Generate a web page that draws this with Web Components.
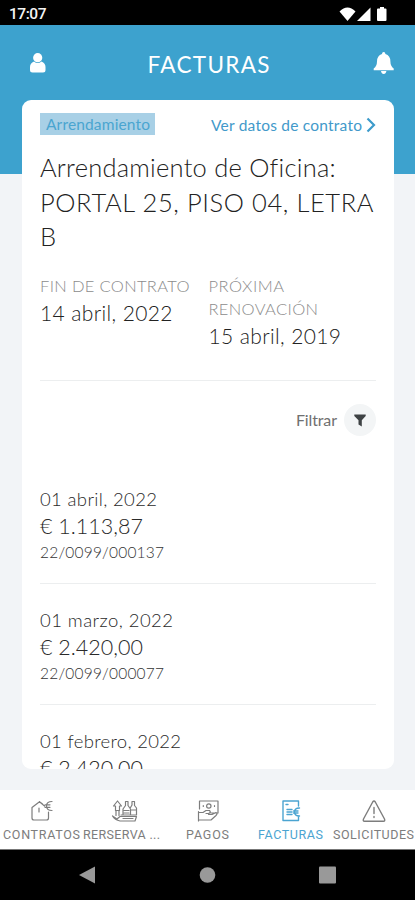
<!DOCTYPE html>
<html lang="es">
<head>
<meta charset="utf-8">
<title>Facturas</title>
<style>
html,body{margin:0;height:100%;overflow:hidden;background:#f2f4f7}
body{font-family:Lato,"Open Sans",sans-serif;font-weight:400;color:#454545}
</style>
</head>
<body>
<app-screen></app-screen>
<script>
const define = (name, html, setup) => customElements.define(name, class extends HTMLElement {
  connectedCallback() {
    if (this.shadowRoot) return;
    const t = document.createElement('template');
    t.innerHTML = html;
    this.attachShadow({ mode: 'open' }).append(t.content.cloneNode(true));
    if (setup) setup(this, this.shadowRoot);
  }
});

/* One line of text, tracked so that it fills the width given in "w". */
define('text-line', `<style>:host{display:block;width:max-content;white-space:pre}span{display:inline-block}</style><span><slot></slot></span>`, (el, root) => {
  const s = root.querySelector('span');
  const w = parseFloat(el.getAttribute('w'));
  if (!w) return;
  const n = el.textContent.length;
  const gap = (w - s.getBoundingClientRect().width) / (n - 1);
  s.style.letterSpacing = gap.toFixed(3) + 'px';
  s.style.marginRight = (-gap).toFixed(3) + 'px';
});

define('status-bar', `<style>
:host{display:flex;height:25px;background:#000;color:#f4f4f4;align-items:center;justify-content:space-between;padding:3px 27px 0 9px;box-sizing:border-box;font:500 15.500px/22px Roboto,sans-serif}
svg{display:block;margin-top:-1px}</style>
<text-line w="37.5">17:07</text-line>
<svg width="50" height="16" viewBox="338 5 50 16" fill="#fff"><path d="M339.500 10.500Q347.500 2.500 355.500 10.500L347.500 20Z"/><path d="M370.500 6.500V20H357Z"/><path d="M378 7.500h2V6h4v1.500h1.500q1 0 1 1V19q0 1-1 1H378q-1 0-1-1V8.500q0-1 1-1Z"/></svg>`);

define('title-bar', `<style>
:host{display:flex;height:149px;box-sizing:border-box;background:#3da2ce;color:#fff;padding:24px 21px 0 29px;justify-content:space-between;align-items:flex-start;font-size:22.500px;line-height:31px}
svg{display:block;margin-top:3px}text-line{margin-left:-3px}</style>
<svg width="18" height="22" viewBox="29 52 18 22" fill="#fff"><circle cx="37.700" cy="57.700" r="4.600"/><path d="M34 61.500Q37.700 64.500 41.500 61.500Q45.500 63 45.500 67V70Q45.500 72.500 43 72.500H32.500Q30 72.500 30 70V67Q30 63 34 61.500Z"/></svg>
<text-line w="122">FACTURAS</text-line>
<svg width="22" height="24" viewBox="373 51 22 24" fill="#fff" style="margin-top:2px;margin-right:-1px"><path d="M382 54q0-2 1.700-2t1.700 2q5 1.500 5 7.500 0 4.500 3.300 7v1.700H373.700v-1.700q3.300-2.500 3.300-7 0-6 5-7.500ZM381 71h5.400q-.5 3-2.700 3t-2.700-3Z"/></svg>`);

define('type-tag', `<style>:host{display:block;background:#a8d0e6;color:#4aa5d0;width:115px;height:22px;box-sizing:border-box;padding-left:6px;font-size:15.500px;line-height:23px}</style><text-line w="104">Arrendamiento</text-line>`);

define('contract-link', `<style>:host{display:flex;color:#4299ca;font-size:15.500px;line-height:24px;gap:4px}svg{display:block;margin-top:4px}</style>
<text-line w="151">Ver datos de contrato</text-line><svg width="10" height="16" viewBox="0 0 10 16" fill="none" stroke="#3d9bcb" stroke-width="2.200"><path d="M1.500 1.500 8 8 1.500 14.500"/></svg>`);

define('contract-head', `<style>
:host{display:block;height:267px;border-bottom:1px solid #eceeef;box-sizing:content-box}
.top{display:flex;justify-content:space-between;height:37px}
.title{font-size:25.500px;line-height:34.500px;color:#222;height:125px;font-weight:300}
.dates{display:grid;grid-template-columns:168.500px 1fr}
.l{font-size:16.500px;line-height:23px;color:#8c8c8c;font-weight:300}.v{font-size:21px;line-height:30px;color:#222;font-weight:300}
</style>
<div class="top"><type-tag></type-tag><contract-link></contract-link></div>
<div class="title"><text-line w="295">Arrendamiento de Oficina:</text-line><text-line w="333.5">PORTAL 25, PISO 04, LETRA</text-line><text-line>B</text-line></div>
<div class="dates"><div><text-line class="l" w="149.500">FIN DE CONTRATO</text-line><text-line class="v" w="132.500">14 abril, 2022</text-line></div>
<div><text-line class="l" w="75.500">PRÓXIMA</text-line><text-line class="l" w="109.500">RENOVACIÓN</text-line><text-line class="v" w="132.500">15 abril, 2019</text-line></div></div>`);

define('filter-button', `<style>:host{display:flex;height:82px;box-sizing:border-box;padding-top:23px;justify-content:flex-end;gap:7px;font-size:16px;line-height:32px;color:#707070}
i{width:32px;height:32px;border-radius:50%;background:#f3f5f6;display:grid;place-items:center}svg{display:block}</style>
<text-line w="41">Filtrar</text-line><i><svg width="12" height="13" viewBox="0 0 12 13" fill="#3e4244"><path d="M.3.500H11.700V2L7.800 6.300V12.500L4.500 10.500V6.300L.3 2Z"/></svg></i>`);

define('invoice-row', `<style>:host{display:block;height:121px;box-sizing:border-box;padding-top:23px;border-bottom:1px solid #eceeef;color:#2a2a2a;font-weight:300}
.d{font-size:18.500px;line-height:27px}.a{font-size:21.500px;line-height:27px}.c{font-size:15.500px;line-height:24px;color:#333}</style><div class="b"></div>`, (el, root) => {
  for (const [cls, key] of [['d', 'date'], ['a', 'amount'], ['c', 'code']]) {
    if (!el.hasAttribute(key)) continue;
    const [text, w] = el.getAttribute(key).split('|');
    const t = document.createElement('text-line');
    t.className = cls; t.textContent = text; t.setAttribute('w', w);
    root.querySelector('.b').append(t);
  }
});

define('contract-card', `<style>:host{display:block;box-sizing:border-box;width:372px;height:669px;border-radius:9px;background:#fff;overflow:hidden;padding:13px 18px 0}</style><slot></slot>`);

define('nav-item', `<style>:host{display:flex;flex-direction:column;align-items:center;color:#7d7d7d;font:400 12.500px/22px Roboto,sans-serif}:host([active]){color:#4ba4d1}
:host([tight]) div{margin-right:6px}
::slotted(svg){display:block;width:28px;height:26px;fill:none;stroke:currentColor;stroke-width:1.200;stroke-linejoin:round;stroke-linecap:round}</style><slot name="icon"></slot><div></div>`, (el, root) => {
  const t = document.createElement('text-line');
  t.textContent = el.getAttribute('label'); t.setAttribute('w', el.getAttribute('w'));
  root.querySelector('div').append(t);
});

define('tab-bar', `<style>:host{display:grid;grid-template-columns:repeat(5,83px);height:59px;padding-top:8px;box-sizing:border-box;background:#fff}nav-item{min-width:0}</style>
<nav-item label="CONTRATOS" w="77"><svg slot="icon" viewBox="0 0 28 26"><path d="M14.500 6 11.500 3.700 4 9.500V20Q4 22 6 22H18.500Q20.500 22 20.500 20V14M11.500 3.700 16.500 8M11 10V14M24 3.500Q18.500 3.500 18.500 8T24 12.500M17 6.800H22M17 9.300H22"/></svg></nav-item>
<nav-item tight label="RERSERVA ..." w="77"><svg slot="icon" viewBox="0 0 28 26"><path d="M2.500 8 6.500 3 10.500 8H8.500V12.500H4.500V8ZM5 13V17.500M8 13V17.500M1.500 18 6 21 9 18.500H25.500L24 23H9Q4 22 1.500 18M12 17V11L14.500 7.500V3.500H17V7.500L19.500 11V17M19.500 9.500 21 7V3.500H23.500V7.500L25.500 10V17H10M13 12.500H18M20.500 12H25M12 20.500H22M13 15H18"/></svg></nav-item>
<nav-item label="PAGOS" w="43"><svg slot="icon" viewBox="0 0 28 26"><path d="M5.500 11V3H24V15H17M9.300 7.500V8.500M20.500 7.500V8.500M4.500 13.500V23M4.500 14.500H9L12 12.500H15.500Q17.500 14.500 14.500 15.500H12M14.500 16.500H18L22 14.500Q24 15.500 22 17.500L17 22H4.500"/><circle cx="14.800" cy="8" r="2.200"/></svg></nav-item>
<nav-item active label="FACTURAS" w="65"><svg slot="icon" viewBox="0 0 28 26"><path stroke-width="1.400" d="M21.500 8V3H6V22.500H21.500V19M9 6.500H11M10 11.500H15M10 14H15M10 16.500H15M22.500 10Q17.500 10 17.500 14T22.500 18M16.500 13H21M16.500 15H21"/></svg></nav-item>
<nav-item label="SOLICITUDES" w="81"><svg slot="icon" viewBox="0 0 28 26"><path d="M12.700 4Q14 2 15.300 4L24.500 21Q25.300 23.300 23.500 23.300H4.500Q2.700 23.300 3.500 21ZM14 9.500V15.500M14 18.500V19.500" stroke-width="1.400"/></svg></nav-item>`);

define('system-nav', `<style>:host{display:flex;justify-content:space-between;height:51px;box-sizing:border-box;background:#000;border-top:1px solid #777;padding:16px 79px 0}svg{display:block}</style>
<svg width="17" height="18" viewBox="0 0 17 18" fill="#999"><path d="M0 9 16 .500V17.500Z"/></svg><svg width="17" height="18" viewBox="0 0 17 18" fill="#999"><circle cx="8.500" cy="9" r="7.800"/></svg><svg width="17" height="18" viewBox="0 0 17 18" fill="#999"><rect y=".500" width="17" height="17" rx="1"/></svg>`);

define('app-screen', `<style>:host{display:flex;flex-direction:column;width:415px;height:900px;background:#f2f4f7}
contract-card{margin:-74px 0 21px 22px}</style>
<status-bar></status-bar><title-bar></title-bar>
<contract-card><contract-head></contract-head><filter-button></filter-button>
<invoice-row date="01 abril, 2022|117" amount="€ 1.113,87|103" code="22/0099/000137|124"></invoice-row>
<invoice-row date="01 marzo, 2022|133" amount="€ 2.420,00|103" code="22/0099/000077|124"></invoice-row>
<invoice-row date="01 febrero, 2022|141" amount="€ 2.420,00|103"></invoice-row></contract-card>
<tab-bar></tab-bar><system-nav></system-nav>`);
</script>
</body>
</html>
